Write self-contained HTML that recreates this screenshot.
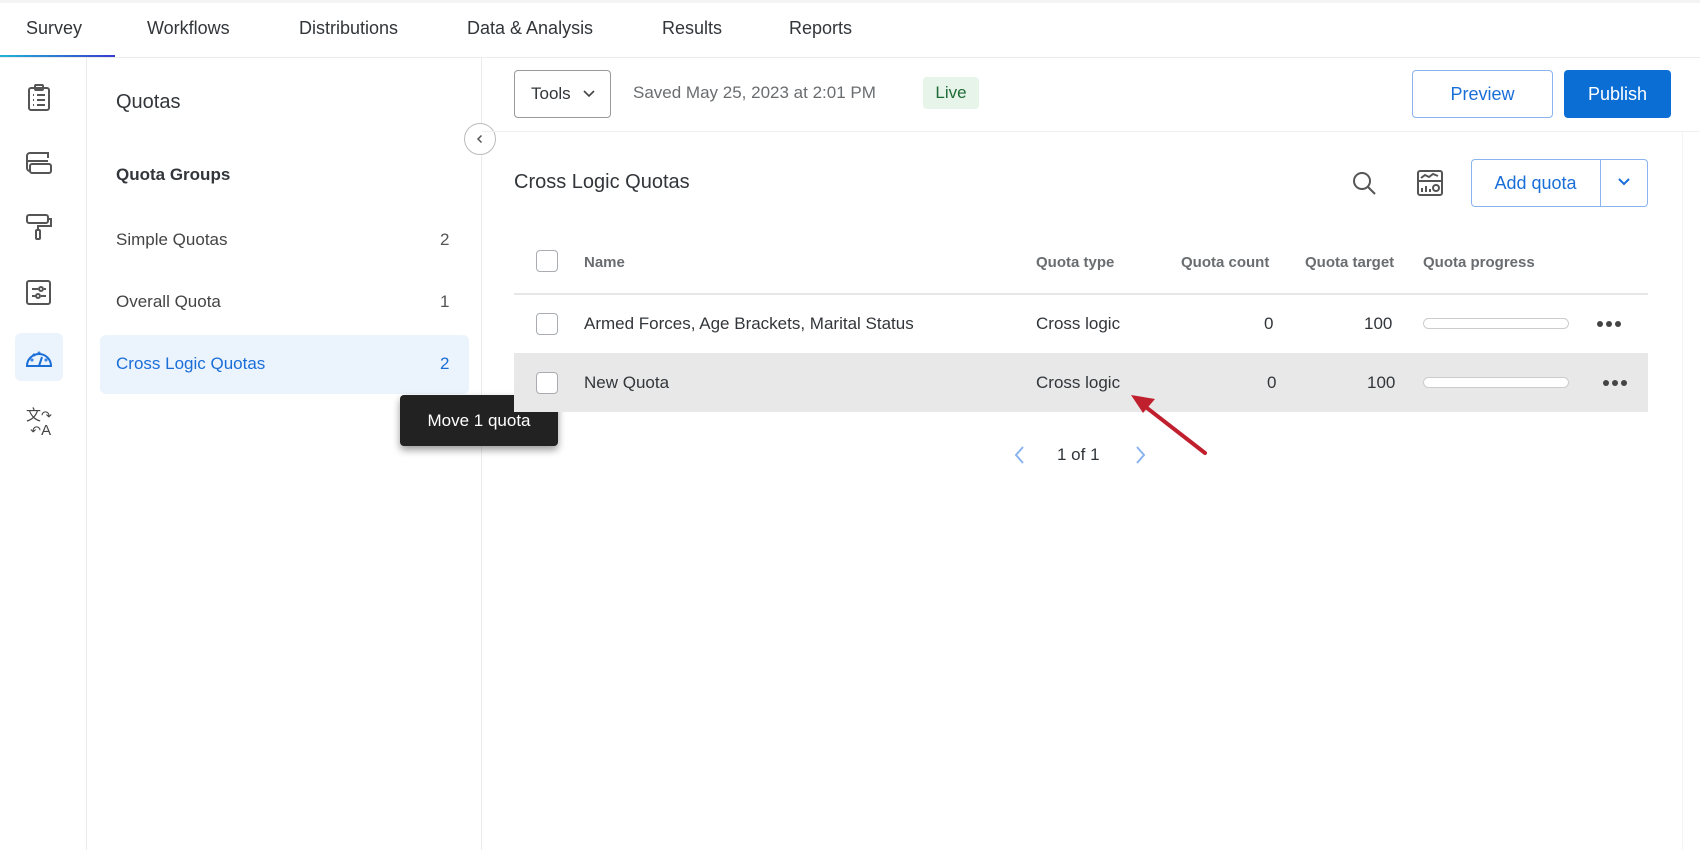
<!DOCTYPE html>
<html><head><meta charset="utf-8"><style>
*{box-sizing:border-box;margin:0;padding:0}
body{width:1700px;height:850px;overflow:hidden;background:#fff;font-family:"Liberation Sans",sans-serif;color:#32363a;position:relative}
.a{position:absolute}
.tab{position:absolute;top:18px;font-size:18px;color:#32363a}
.cnt{position:absolute;left:440px;font-size:17px;color:#555}
.side{position:absolute;left:116px;font-size:17px;color:#444}
.th{position:absolute;top:254px;font-size:15px;font-weight:bold;color:#6a6d70}
.td{position:absolute;font-size:17px;color:#32363a}
.cb{position:absolute;left:536px;width:22px;height:22px;border:1.5px solid #a9acb0;border-radius:4px;background:#fff}
.bar{position:absolute;left:1423px;width:146px;height:11px;border:1px solid #ccc;border-radius:6px;background:#fff}
.ic{position:absolute;left:24px;width:30px;height:30px}
</style></head><body>
<div class="a" style="left:0;top:0;width:1700px;height:3px;background:#f4f4f4"></div>
<div class="tab" style="left:26px">Survey</div>
<div class="tab" style="left:147px">Workflows</div>
<div class="tab" style="left:299px">Distributions</div>
<div class="tab" style="left:467px">Data &amp; Analysis</div>
<div class="tab" style="left:662px">Results</div>
<div class="tab" style="left:789px">Reports</div>
<div class="a" style="left:0;top:55px;width:115px;height:3px;background:linear-gradient(90deg,#1fb5d6,#3a3ad0)"></div>
<div class="a" style="left:0;top:57px;width:1700px;height:1px;background:#ececec"></div>
<div class="a" style="left:86px;top:58px;width:1px;height:792px;background:#ececec"></div>
<div class="a" style="left:481px;top:58px;width:1px;height:792px;background:#ececec"></div>
<div class="a" style="left:1682px;top:132px;width:1px;height:718px;background:#f4f4f4"></div>
<!-- rail icons -->
<svg class="ic" style="top:83px" viewBox="0 0 30 30" fill="none" stroke="#555" stroke-width="2"><rect x="5" y="5" width="20" height="22" rx="2"/><rect x="11" y="2" width="8" height="5" rx="1"/><path d="M9 12h1M13 12h8M9 17h1M13 17h8M9 22h1M13 22h8"/></svg>
<svg class="ic" style="top:148px" viewBox="0 0 30 30" fill="none" stroke="#555" stroke-width="2"><path d="M24 10V5H6a3 3 0 0 0-3 3v12a3 3 0 0 0 3 3"/><path d="M3 13h21"/><rect x="6" y="16" width="21" height="9" rx="2"/></svg>
<svg class="ic" style="top:212px" viewBox="0 0 30 30" fill="none" stroke="#555" stroke-width="2"><rect x="3" y="3" width="21" height="8" rx="2"/><path d="M24 7h3v7H14v4"/><rect x="12" y="18" width="4" height="9" rx="1"/></svg>
<svg class="ic" style="top:277px" viewBox="0 0 30 30" fill="none" stroke="#555" stroke-width="2"><rect x="3" y="4" width="23" height="23" rx="2"/><path d="M8 12h6M20 12h2M8 19h4M17 19h5"/><circle cx="17" cy="12" r="2"/><circle cx="14" cy="19" r="2"/></svg>
<div class="a" style="left:15px;top:333px;width:48px;height:48px;background:#ebf3fd;border-radius:6px"></div>
<svg class="ic" style="top:342px" viewBox="0 0 30 30" fill="none" stroke="#1a6ed8" stroke-width="2"><path d="M3 24a12 12 0 1 1 24 0z"/><path d="M15 24l3-9"/><circle cx="8" cy="18" r=".5"/><circle cx="10" cy="13" r=".5"/><circle cx="15" cy="11" r=".5"/><circle cx="22" cy="18" r=".5"/></svg>
<div class="a" style="left:26px;top:408px;font-size:15px;color:#444;line-height:15px">文<span style="font-size:13px">↷</span><br>&nbsp;<span style="font-size:13px">↶</span>A</div>
<!-- sidebar -->
<div class="a" style="left:116px;top:91px;font-size:20px;color:#32363a">Quotas</div>
<div class="a" style="left:116px;top:165px;font-size:17px;font-weight:bold;color:#32363a">Quota Groups</div>
<div class="side" style="top:230px">Simple Quotas</div><div class="cnt" style="top:230px">2</div>
<div class="side" style="top:292px">Overall Quota</div><div class="cnt" style="top:292px">1</div>
<div class="a" style="left:100px;top:335px;width:369px;height:59px;background:#ebf3fd;border-radius:6px"></div>
<div class="side" style="top:354px;color:#1a6ed8">Cross Logic Quotas</div><div class="cnt" style="top:354px;color:#1a6ed8">2</div>
<div class="a" style="left:464px;top:123px;width:32px;height:32px;border:1px solid #bbb;border-radius:50%;background:#fff"></div>
<svg class="a" style="left:474px;top:133px" width="12" height="12" viewBox="0 0 12 12" fill="none" stroke="#555" stroke-width="1.5"><path d="M7.5 2.5L4 6l3.5 3.5"/></svg>
<div class="a" style="left:400px;top:395px;width:158px;height:51px;background:#222;border-radius:4px;box-shadow:0 4px 8px rgba(0,0,0,.4);color:#fff;font-size:17px;line-height:51px;text-align:center">Move 1 quota</div>
<!-- toolbar -->
<div class="a" style="left:514px;top:70px;width:97px;height:48px;border:1px solid #999;border-radius:4px;font-size:17px;line-height:46px;padding-left:16px">Tools</div>
<svg class="a" style="left:582px;top:88px" width="14" height="12" viewBox="0 0 14 12" fill="none" stroke="#444" stroke-width="1.6"><path d="M2 3l5 5 5-5"/></svg>
<div class="a" style="left:633px;top:83px;font-size:17px;color:#6a6d70">Saved May 25, 2023 at 2:01 PM</div>
<div class="a" style="left:923px;top:77px;width:56px;height:32px;background:#e6f4e9;border-radius:4px;color:#1f6b35;font-size:17px;line-height:32px;text-align:center">Live</div>
<div class="a" style="left:1412px;top:70px;width:141px;height:48px;border:1px solid #8ab4ef;border-radius:4px;color:#1a6ed8;font-size:18px;line-height:46px;text-align:center">Preview</div>
<div class="a" style="left:1564px;top:70px;width:107px;height:48px;background:#0b6ed5;border-radius:4px;color:#fff;font-size:18px;line-height:48px;text-align:center">Publish</div>
<div class="a" style="left:482px;top:131px;width:1218px;height:1px;background:#f0f0f0"></div>
<!-- title row -->
<div class="a" style="left:514px;top:171px;font-size:20px">Cross Logic Quotas</div>
<svg class="a" style="left:1351px;top:170px" width="28" height="28" viewBox="0 0 28 28" fill="none" stroke="#555" stroke-width="2"><circle cx="11" cy="11" r="8"/><path d="M17 17l7 7"/></svg>
<svg class="a" style="left:1416px;top:169px" width="28" height="28" viewBox="0 0 28 28" fill="none" stroke="#555" stroke-width="2"><rect x="2" y="2" width="24" height="24" rx="2"/><path d="M2 12h24M5 9l4-3 4 2 4-3 5 2M6 23v-4M10 23v-6M14 23v-3"/><circle cx="20" cy="19" r="3"/></svg>
<div class="a" style="left:1471px;top:159px;width:177px;height:48px;border:1px solid #8ab4ef;border-radius:4px"></div>
<div class="a" style="left:1600px;top:159px;width:1px;height:48px;background:#8ab4ef"></div>
<div class="a" style="left:1471px;top:159px;width:129px;line-height:48px;text-align:center;color:#1a6ed8;font-size:18px">Add quota</div>
<svg class="a" style="left:1616px;top:176px" width="16" height="12" viewBox="0 0 16 12" fill="none" stroke="#1a6ed8" stroke-width="2"><path d="M3 3l5 5 5-5"/></svg>
<!-- table -->
<div class="cb" style="top:250px"></div>
<div class="th" style="left:584px">Name</div>
<div class="th" style="left:1036px">Quota type</div>
<div class="th" style="left:1181px">Quota count</div>
<div class="th" style="left:1305px">Quota target</div>
<div class="th" style="left:1423px">Quota progress</div>
<div class="a" style="left:514px;top:293px;width:1134px;height:2px;background:#e6e6e6"></div>
<div class="cb" style="top:313px"></div>
<div class="td" style="left:584px;top:314px">Armed Forces, Age Brackets, Marital Status</div>
<div class="td" style="left:1036px;top:314px">Cross logic</div>
<div class="td" style="left:1264px;top:314px">0</div>
<div class="td" style="left:1364px;top:314px">100</div>
<div class="bar" style="top:318px"></div>
<svg class="a" style="left:1596px;top:319px" width="26" height="10"><circle cx="4" cy="5" r="3" fill="#444"/><circle cx="13" cy="5" r="3" fill="#444"/><circle cx="22" cy="5" r="3" fill="#444"/></svg>
<div class="a" style="left:514px;top:353px;width:1134px;height:59px;background:#e8e8e8"></div>
<div class="cb" style="top:372px"></div>
<div class="td" style="left:584px;top:373px">New Quota</div>
<div class="td" style="left:1036px;top:373px">Cross logic</div>
<div class="td" style="left:1267px;top:373px">0</div>
<div class="td" style="left:1367px;top:373px">100</div>
<div class="bar" style="top:377px"></div>
<svg class="a" style="left:1602px;top:378px" width="26" height="10"><circle cx="4" cy="5" r="3" fill="#444"/><circle cx="13" cy="5" r="3" fill="#444"/><circle cx="22" cy="5" r="3" fill="#444"/></svg>
<!-- pagination -->
<svg class="a" style="left:1013px;top:444px" width="14" height="22" viewBox="0 0 14 22" fill="none" stroke="#8ab4ef" stroke-width="2"><path d="M10 3l-7 8 7 8"/></svg>
<div class="a" style="left:1057px;top:445px;font-size:17px">1 of 1</div>
<svg class="a" style="left:1133px;top:444px" width="14" height="22" viewBox="0 0 14 22" fill="none" stroke="#8ab4ef" stroke-width="2"><path d="M4 3l7 8-7 8"/></svg>
<!-- red arrow -->
<svg class="a" style="left:1120px;top:385px" width="100" height="80" viewBox="0 0 100 80"><path d="M85 68L18 16" stroke="#c0202e" stroke-width="4" stroke-linecap="round"/><path d="M11 10l24 4-12 14z" fill="#c0202e"/></svg>
</body></html>
